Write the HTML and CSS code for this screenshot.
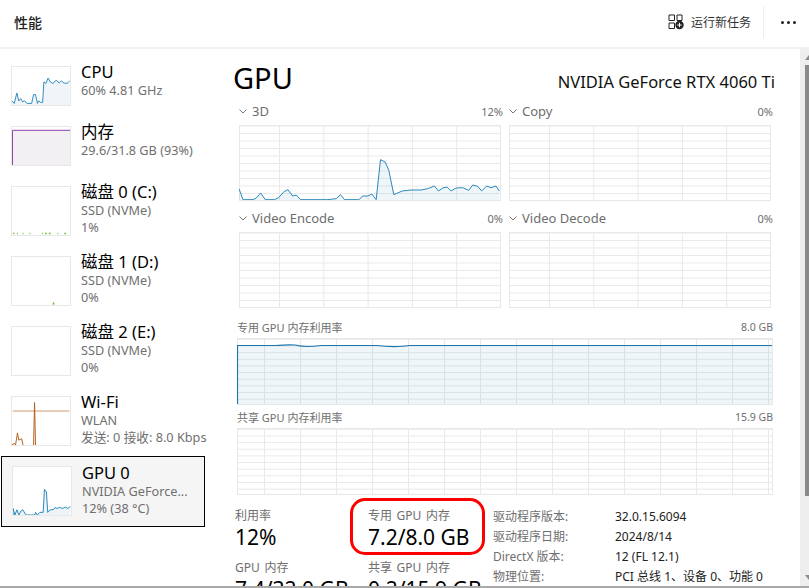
FILE: index.html
```html
<!DOCTYPE html>
<html lang="zh-CN">
<head>
<meta charset="utf-8">
<title>性能</title>
<link rel="stylesheet" href="styles.css">
</head>
<body>
<div class="app">
  <header class="topbar">
    <h1 class="page-title">性能</h1>
    <div class="actions">
      <button class="run-task">
        <svg class="run-icon" width="16" height="16" viewBox="0 0 16 16">
          <path d="M1 1h5.500v5.500H1zM9 1h5v5.500H9zM1 9h5.500v5.500H1z" fill="none" stroke="#222" stroke-width="1"/>
          <circle cx="11.500" cy="11" r="4.200" fill="#222"/>
          <path d="M11.500 8.800v4.400M9.300 11h4.400" stroke="#fff" stroke-width="1"/>
        </svg>
        <span>运行新任务</span>
      </button>
      <span class="divider"></span>
      <span class="more"><i></i><i></i><i></i></span>
    </div>
  </header>
  <div class="content">
    <nav class="sidebar">
      <div class="item short">
        <svg class="thumb" viewBox="33 48 180 120" preserveAspectRatio="none">
          <path d="M33 155L40 163 48 130 54 155 60 148 66 158 72 155 80 163H94L100 135 106 135 112 163 115 155 122 160 128 160 132 95 138 100 145 83 152 95 160 100 170 90 180 98 186 92 195 99 205 99 212 92V168H33Z" fill="#f0f5f9"/>
          <path d="M33 155L40 163 48 130 54 155 60 148 66 158 72 155 80 163H94L100 135 106 135 112 163 115 155 122 160 128 160 132 95 138 100 145 83 152 95 160 100 170 90 180 98 186 92 195 99 205 99 212 92" fill="none" stroke="#2b88bd" stroke-width="3"/>
        </svg>
        <div class="info"><div class="name">CPU</div><div class="sub">60% 4.81 GHz</div></div>
      </div>
      <div class="item short">
        <svg class="thumb" viewBox="0 0 60 40" preserveAspectRatio="none">
          <path d="M.5 40V3.500H60V40Z" fill="#f2f0f3"/>
          <path d="M.5 40V3.500H60" fill="none" stroke="#8b3aa6" stroke-width="1"/>
        </svg>
        <div class="info"><div class="name">内存</div><div class="sub">29.6/31.8 GB (93%)</div></div>
      </div>
      <div class="item">
        <svg class="thumb" viewBox="0 0 60 50" preserveAspectRatio="none">
          <path d="M1 48.500h1.500M5 48.500h1M11 48.500h1M18 48.500h1M31 48.500h1M34 48.500h2M38 48.500h2M47 48.500h1M54 48.500h2" stroke="#7cc142" stroke-width="1.500"/>
        </svg>
        <div class="info"><div class="name">磁盘 0 (C:)</div><div class="sub">SSD (NVMe)</div><div class="sub">1%</div></div>
      </div>
      <div class="item">
        <svg class="thumb" viewBox="0 0 60 50" preserveAspectRatio="none">
          <path d="M41.500 49.500l1.500-3 1.500 3z" fill="#7cc142"/>
        </svg>
        <div class="info"><div class="name">磁盘 1 (D:)</div><div class="sub">SSD (NVMe)</div><div class="sub">0%</div></div>
      </div>
      <div class="item">
        <svg class="thumb" viewBox="0 0 60 50"></svg>
        <div class="info"><div class="name">磁盘 2 (E:)</div><div class="sub">SSD (NVMe)</div><div class="sub">0%</div></div>
      </div>
      <div class="item">
        <svg class="thumb" viewBox="33 48 180 147" preserveAspectRatio="none">
          <path d="M36 91H211" stroke="#cf9465" stroke-width="3" fill="none"/>
          <path d="M33 195L40 190 44 195 50 158 54 180 58 178 63 176 67 195M100 195L103 65 106 195" fill="none" stroke="#b35f1b" stroke-width="3"/>
        </svg>
        <div class="info"><div class="name">Wi-Fi</div><div class="sub">WLAN</div><div class="sub">发送: 0 接收: 8.0 Kbps</div></div>
      </div>
      <div class="item selected">
        <svg class="thumb" viewBox="38 262 177 146" preserveAspectRatio="none">
          <path d="M38 408V388L44 408 50 392 56 408 62 396 68 392 76 406 80 408H104L107 400 112 408 120 400 130 400 134 330 140 338 144 400 150 393 162 391 166 385 172 388 180 385 190 388 198 384 205 388 213 382V408Z" fill="#edf4f9"/>
          <path d="M38 408V388L44 408 50 392 56 408 62 396 68 392 76 406 80 408H104L107 400 112 408 120 400 130 400 134 330 140 338 144 400 150 393 162 391 166 385 172 388 180 385 190 388 198 384 205 388 213 382" fill="none" stroke="#2b88bd" stroke-width="3"/>
        </svg>
        <div class="info"><div class="name">GPU 0</div><div class="sub">NVIDIA GeForce...</div><div class="sub">12% (38 °C)</div></div>
      </div>
    </nav>
    <main class="main">
      <div class="title-row">
        <h2 class="gpu-title">GPU</h2>
        <div class="gpu-name">NVIDIA GeForce RTX 4060 Ti</div>
      </div>
      <div class="engines">
        <section class="engine">
          <div class="engine-head">
            <svg class="chev" viewBox="0 0 8 5"><path d="M.5.500L4 4 7.500.500" fill="none" stroke="#777" stroke-width="1"/></svg>
            <span class="engine-name">3D</span><span class="pct">12%</span>
          </div>
          <div class="graph engine-graph">
            <svg class="plot" viewBox="43 214 784 225" preserveAspectRatio="none">
              <path d="M43 405L55 438H85L95 433 108 418 122 438H150L162 432 178 414 190 408 204 427 215 424 228 438H310L335 435 348 423 360 438H403L415 427 430 427 442 421 455 438 468 318 482 325 493 350 508 423 533 412 560 409 590 409 610 405 630 397 642 412 655 403 668 400 680 412 695 403 715 402 733 410 745 394 760 398 772 412 787 397 800 402 815 397 825 412V439H43Z" fill="rgba(17,125,187,.07)"/>
              <path d="M43 405L55 438H85L95 433 108 418 122 438H150L162 432 178 414 190 408 204 427 215 424 228 438H310L335 435 348 423 360 438H403L415 427 430 427 442 421 455 438 468 318 482 325 493 350 508 423 533 412 560 409 590 409 610 405 630 397 642 412 655 403 668 400 680 412 695 403 715 402 733 410 745 394 760 398 772 412 787 397 800 402 815 397 825 412" fill="none" stroke="#2b88bd" stroke-width="3"/>
            </svg>
          </div>
        </section>
        <section class="engine">
          <div class="engine-head">
            <svg class="chev" viewBox="0 0 8 5"><path d="M.5.500L4 4 7.500.500" fill="none" stroke="#777" stroke-width="1"/></svg>
            <span class="engine-name">Copy</span><span class="pct">0%</span>
          </div>
          <div class="graph engine-graph"></div>
        </section>
        <section class="engine">
          <div class="engine-head">
            <svg class="chev" viewBox="0 0 8 5"><path d="M.5.500L4 4 7.500.500" fill="none" stroke="#777" stroke-width="1"/></svg>
            <span class="engine-name">Video Encode</span><span class="pct">0%</span>
          </div>
          <div class="graph engine-graph"></div>
        </section>
        <section class="engine">
          <div class="engine-head">
            <svg class="chev" viewBox="0 0 8 5"><path d="M.5.500L4 4 7.500.500" fill="none" stroke="#777" stroke-width="1"/></svg>
            <span class="engine-name">Video Decode</span><span class="pct">0%</span>
          </div>
          <div class="graph engine-graph"></div>
        </section>
      </div>
      <section class="memory first">
        <div class="memory-head"><span>专用 GPU 内存利用率</span><span class="cap">8.0 GB</span></div>
        <div class="graph memory-graph">
          <svg class="plot" viewBox="0 0 536 66" preserveAspectRatio="none">
            <path d="M.5 66V7.500H536V66Z" fill="rgba(17,125,187,.07)"/>
            <path d="M.5 66V7.500H38C45 7 52 6.500 58 7 66 9 74 9 84 7.500H140C150 9 165 9 172 7.500H536" fill="none" stroke="#1f78ab" stroke-width="1.200"/>
          </svg>
        </div>
      </section>
      <section class="memory second">
        <div class="memory-head"><span>共享 GPU 内存利用率</span><span class="cap">15.9 GB</span></div>
        <div class="graph memory-graph shared-graph"></div>
      </section>
      <section class="stats">
        <div class="stat"><div class="stat-label">利用率</div><div class="stat-value">12%</div></div>
        <div class="stat highlighted"><div class="stat-label">专用 GPU 内存</div><div class="stat-value">7.2/8.0 GB</div></div>
        <dl class="props">
          <dt>驱动程序版本:</dt><dd>32.0.15.6094</dd>
          <dt>驱动程序日期:</dt><dd>2024/8/14</dd>
          <dt>DirectX 版本:</dt><dd>12 (FL 12.1)</dd>
          <dt>物理位置:</dt><dd>PCI 总线 1、设备 0、功能 0</dd>
        </dl>
        <div class="stat"><div class="stat-label">GPU 内存</div><div class="stat-value">7.4/32.0 GB</div></div>
        <div class="stat"><div class="stat-label">共享 GPU 内存</div><div class="stat-value">0.2/15.9 GB</div></div>
      </section>
    </main>
    <div class="scrollbar">
      <svg class="arrow" viewBox="0 0 5 6"><path d="M5 0V6H0Z" fill="#8a8a8a"/></svg>
      <div class="scroll-thumb"></div>
      <svg class="arrow down" viewBox="0 0 5 6"><path d="M0 0H5V6Z" fill="#8a8a8a"/></svg>
    </div>
  </div>
  <div class="window-edge"></div>
</div>
</body>
</html>
```

FILE: styles.css
```css
*, *::after { box-sizing: border-box; }
html, body { margin: 0; padding: 0; }
body {
  width: 809px;
  height: 588px;
  overflow: hidden;
  background: #fff;
  color: #111;
  font-family: "Noto Sans", "Noto Sans CJK SC", sans-serif;
}
.app { display: flex; flex-direction: column; width: 809px; height: 588px; overflow: hidden; }

.topbar {
  flex: none;
  height: 49px;
  display: flex;
  align-items: center;
  justify-content: space-between;
  padding: 0 13px 3px 14px;
  border-bottom: 2px solid #f3f1ed;
}
.page-title { margin: 0; font-size: 14px; font-weight: 500; color: #222; }
.actions { display: flex; align-items: center; height: 32px; }
.run-task {
  display: flex;
  align-items: center;
  gap: 7px;
  padding: 0;
  border: 0;
  background: none;
  font: inherit;
  font-size: 12px;
  color: #333;
}
.run-icon { display: block; }
.divider { width: 1px; height: 32px; background: #eee; margin: 0 17px 0 12px; }
.more { display: flex; gap: 3px; }
.more i { width: 3px; height: 3px; border-radius: 50%; background: #222; }

.content { flex: 1; min-height: 0; display: flex; }

.sidebar {
  flex: none;
  width: 205px;
  padding: 17px 0 0 11px;
  display: flex;
  flex-direction: column;
  gap: 20px;
}
.item { display: flex; gap: 10px; height: 50px; }
.item.short { height: 40px; }
.thumb {
  flex: none;
  display: block;
  width: 60px;
  height: 100%;
  border: 1px solid #e8e8e8;
  overflow: hidden;
}
.info { min-width: 0; margin-top: -4px; }
.name { font-size: 16.500px; line-height: 20px; color: #000; white-space: nowrap; }
.sub { font-size: 12.700px; line-height: 16.500px; color: #707070; white-space: nowrap; }
.item.selected {
  height: 71px;
  width: 204px;
  margin: -10px 0 0 -10px;
  padding: 9px 0 9px 10px;
  background: #f5f5f5;
  border: 1.500px solid #000;
}
.selected .thumb { height: 50px; background: #fff; }
.selected .info { margin-top: -3px; }

.main { flex: 1; min-width: 0; padding: 9px 0 0 28px; overflow: hidden; }
.title-row { display: flex; align-items: center; justify-content: space-between; height: 40px; padding-right: 25px; }
.gpu-title { margin: 0; font-size: 29px; font-weight: 400; line-height: 40px; color: #000; }
.gpu-name { font-size: 16.500px; color: #111; margin-top: 7px; }

.engines {
  display: grid;
  grid-template-columns: 262px 262px;
  column-gap: 8px;
  row-gap: 9px;
  margin: 5px 0 0 6px;
}
.engine-head { display: flex; align-items: center; height: 22px; padding-bottom: 6px; }
.chev { width: 8px; height: 5px; flex: none; }
.engine-name { margin-left: 5px; font-size: 13px; color: #6e6e6e; }
.pct { margin-left: auto; margin-right: -2px; font-size: 11px; color: #6e6e6e; }

.graph {
  position: relative;
  border: 1px solid #e8e8e8;
  background-color: #fff;
  background-image:
    linear-gradient(to right, #e9e9e9 1px, transparent 1px),
    linear-gradient(to bottom, #e9e9e9 1px, transparent 1px);
}
.engine-graph {
  height: 76px;
  background-size: 44.300px 100%, 100% 7.500px;
  background-position: 39px 0, 0 7px;
}
.plot { position: absolute; left: -1px; top: -1px; display: block; width: calc(100% + 1px); height: calc(100% + 1px); overflow: hidden; }

.memory { margin-left: 4px; width: 536px; }
.memory.first { margin-top: 10px; }
.memory.second { margin-top: 3px; }
.memory-head {
  display: flex;
  justify-content: space-between;
  align-items: center;
  height: 18px;
  margin-bottom: 2px;
  font-size: 11px;
  color: #6e6e6e;
}
.cap { font-size: 10.500px; }
.memory-graph {
  height: 67px;
  background-size: 36px 100%, 100% 6.650px;
  background-position: 26px 0, 0 6.500px;
}

.stats {
  display: grid;
  grid-template-columns: 133px 125px 1fr;
  grid-template-rows: 52px 40px;
  margin: 12px 0 0 2px;
}
.stat { position: relative; }
.stat-label { font-size: 12px; line-height: 17px; color: #6e6e6e; word-spacing: 1.500px; }
.stat-value { font-size: 21px; line-height: 26px; color: #000; white-space: nowrap; }
.highlighted::after {
  content: "";
  position: absolute;
  left: -18px;
  top: -9px;
  width: 135px;
  height: 57px;
  border: 3.500px solid #f00;
  border-radius: 15px;
}
.props {
  grid-column: 3;
  grid-row: 1 / 3;
  display: grid;
  grid-template-columns: 122px 1fr;
  grid-auto-rows: 20px;
  align-items: center;
  margin: -1px 0 0;
  font-size: 12px;
  white-space: nowrap;
}
.props dt { color: #6e6e6e; }
.props dd { margin: 0; color: #222; }

.scrollbar {
  flex: none;
  width: 9px;
  background: #eeeeee;
  display: flex;
  flex-direction: column;
  align-items: flex-end;
  padding-top: 6px;
  position: relative;
}
.arrow { display: block; width: 4px; height: 5px; flex: none; }
.scroll-thumb { width: 4px; height: 431px; margin-top: 5px; background: #8a8a8a; }
.arrow.down { margin-top: 79px; }

.window-edge { flex: none; height: 2px; background: #a9a9a9; }
```
